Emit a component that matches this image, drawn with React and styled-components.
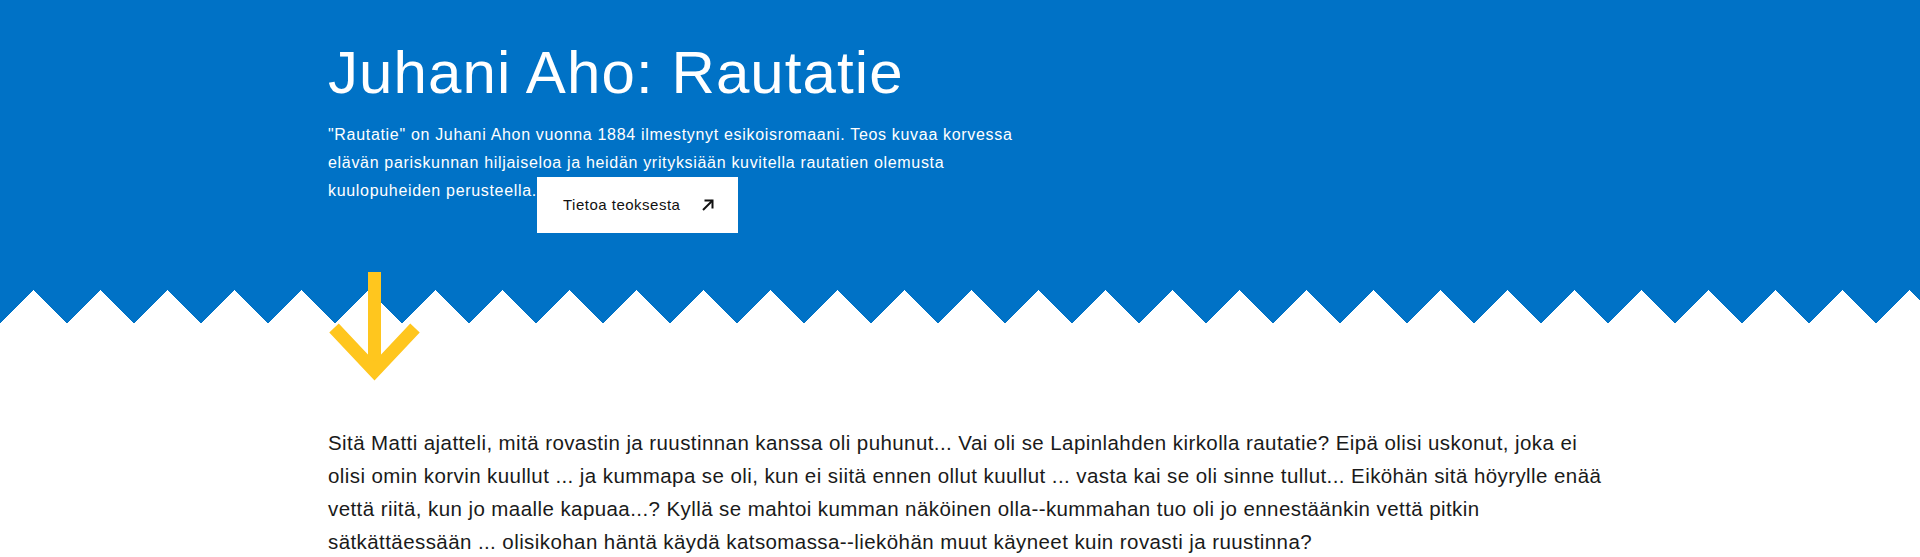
import React from 'react';
import styled, {createGlobalStyle} from 'styled-components';

const GlobalStyle = createGlobalStyle`
    body {
        margin: 0;
        background: #ffffff;
        font-family: "Liberation Sans", Arial, sans-serif;
    }
`;

const Page = styled.div`
    width: 100%;
    overflow: hidden;
`;

const Hero = styled.header`
    background-color: #0072c6;
    color: #ffffff;
`;

const HeroInner = styled.div`
    max-width: 1264px;
    margin: 0 auto;
    padding: 37px 0 57px;
`;

const Title = styled.h1`
    margin: 0;
    font-size: 60px;
    line-height: 72px;
    font-weight: 400;
    letter-spacing: 1.1px;
`;

const Intro = styled.p`
    margin: 12px 0 0;
    max-width: 700px;
    font-size: 16px;
    line-height: 28px;
    letter-spacing: 0.68px;
`;

const InfoButton = styled.a`
    display: inline-flex;
    align-items: center;
    justify-content: space-between;
    vertical-align: top;
    box-sizing: border-box;
    width: 201px;
    height: 56px;
    padding: 0 23px 0 26px;
    background: #ffffff;
    color: #111111;
    font-size: 15px;
    font-weight: 500;
    letter-spacing: 0.5px;
    text-decoration: none;
`;

const Zigzag = styled.div`
    height: 34px;
    background-image: conic-gradient(from 135deg at 50% 0, transparent 0 90deg, #0072c6 90deg);
    background-size: 67px 34px;
    background-repeat: repeat-x;
`;

const Content = styled.main`
    position: relative;
    box-sizing: border-box;
    max-width: 1264px;
    margin: 0 auto;
    padding-top: 102px;
`;

const DownArrow = styled.svg`
    position: absolute;
    top: -52px;
    left: 1px;
`;

const BodyText = styled.p`
    margin: 0 -12px 0 0;
    font-size: 20.5px;
    line-height: 33px;
    letter-spacing: 0.42px;
    color: #1a1a1a;
`;

const ArrowIcon = () => (
    <svg width="14" height="14" viewBox="0 0 14 14" fill="none" stroke="#111" strokeWidth="2">
        <path d="M2 12 L11.5 2.5"/>
        <path d="M3.5 2.5 H11.5 V10.5"/>
    </svg>
);

const App = () => {
    return (
        <Page>
            <GlobalStyle/>
            <Hero>
                <HeroInner>
                    <Title>Juhani Aho: Rautatie</Title>
                    <Intro>
                        "Rautatie" on Juhani Ahon vuonna 1884 ilmestynyt esikoisromaani. Teos kuvaa korvessa
                        elävän pariskunnan hiljaiseloa ja heidän yrityksiään kuvitella rautatien olemusta
                        kuulopuheiden perusteella.<InfoButton href="#">Tietoa teoksesta <ArrowIcon/></InfoButton>
                    </Intro>
                </HeroInner>
            </Hero>
            <Zigzag/>
            <Content>
                <DownArrow width="92" height="110" viewBox="0 0 92 110" fill="none" stroke="#ffc61e" strokeWidth="13">
                    <path d="M45.5 0 V100"/>
                    <path d="M5 56 L45.5 99 L86 56"/>
                </DownArrow>
                <BodyText>
                    Sitä Matti ajatteli, mitä rovastin ja ruustinnan kanssa oli puhunut... Vai oli se Lapinlahden kirkolla rautatie? Eipä olisi uskonut, joka ei olisi omin korvin kuullut ... ja kummapa se oli, kun ei siitä ennen ollut kuullut ... vasta kai se oli sinne tullut... Eiköhän sitä höyrylle enää vettä riitä, kun jo maalle kapuaa...? Kyllä se mahtoi kumman näköinen olla--kummahan tuo oli jo ennestäänkin vettä pitkin sätkättäessään ... olisikohan häntä käydä katsomassa--lieköhän muut käyneet kuin rovasti ja ruustinna?
                </BodyText>
            </Content>
        </Page>
    );
};

export default App;
